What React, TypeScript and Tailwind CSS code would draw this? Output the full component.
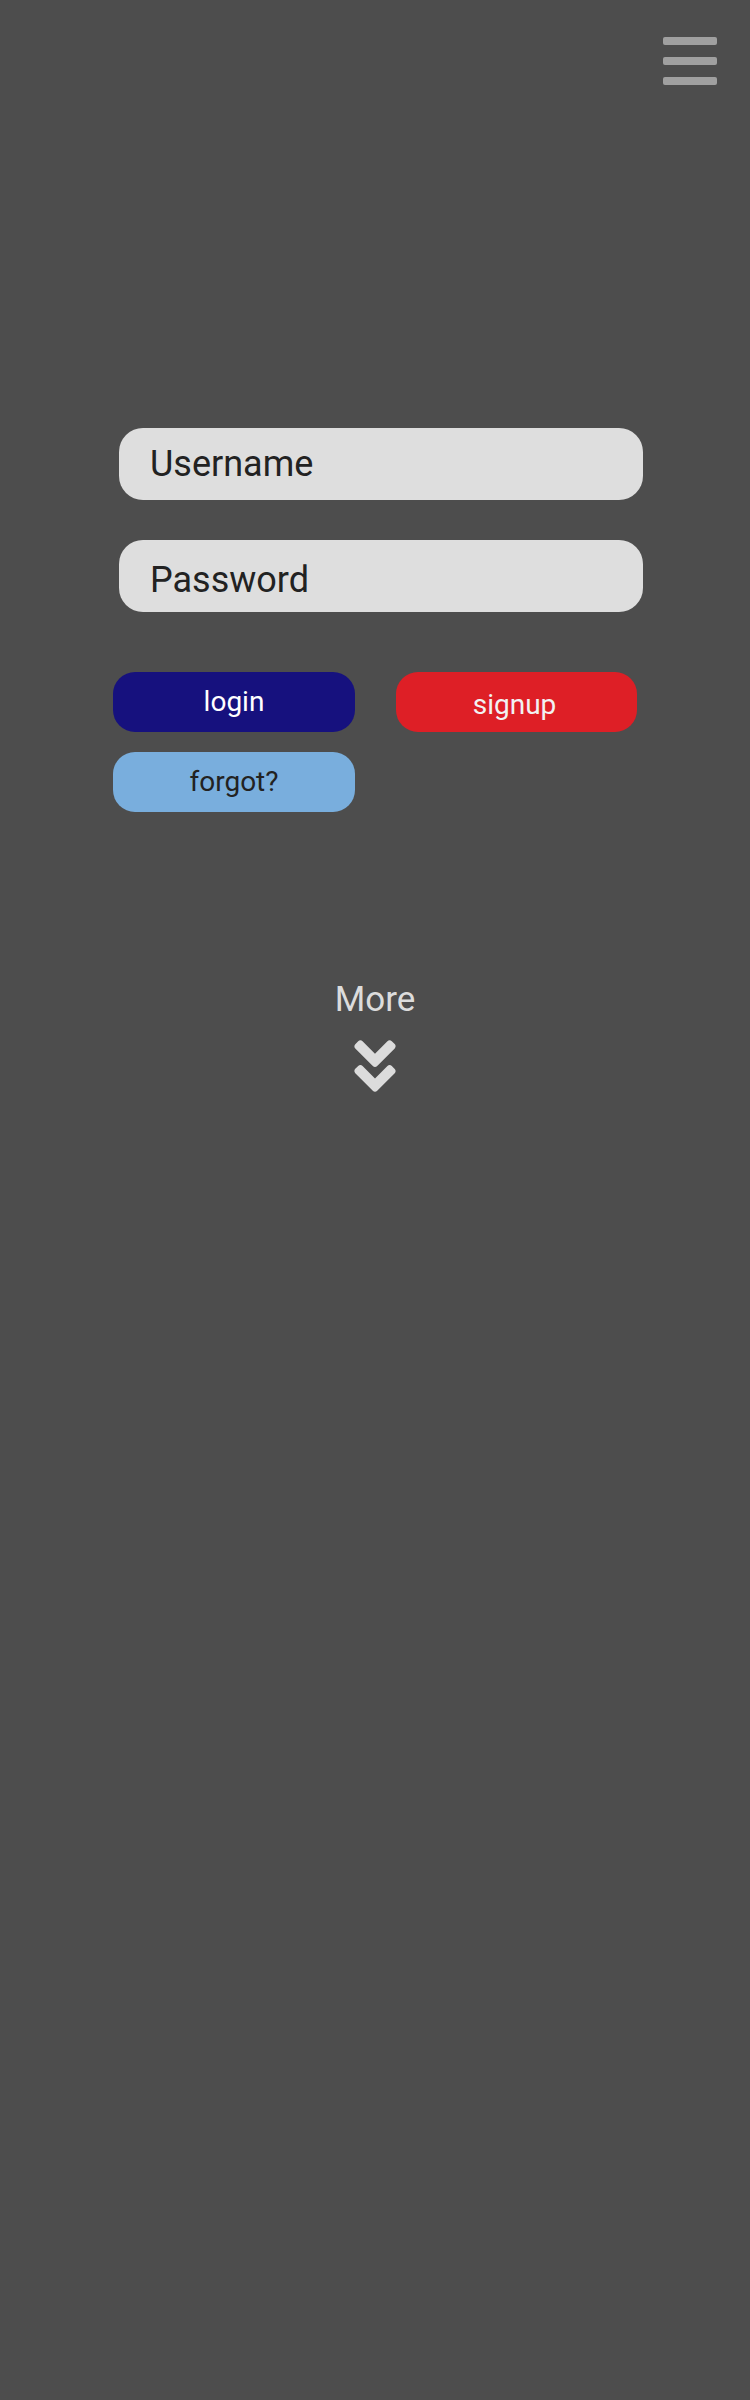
import { FaAngleDoubleDown } from 'react-icons/fa';

function MenuButton() {
  return (
    <button aria-label="menu" className="flex flex-col gap-3">
      <span className="block h-2 w-[54px] rounded-[2px] bg-[#a0a0a0]" />
      <span className="block h-2 w-[54px] rounded-[2px] bg-[#a0a0a0]" />
      <span className="block h-2 w-[54px] rounded-[2px] bg-[#a0a0a0]" />
    </button>
  );
}

export default function App() {
  return (
    <div className="min-h-[2400px] bg-[#4d4d4d] font-['Roboto',sans-serif]">
      {/* top bar */}
      <header className="flex justify-end pt-[37px] pr-[33px]">
        <MenuButton />
      </header>

      {/* login form */}
      <form className="mt-[343px]">
        <div className="ml-[119px] flex w-[524px] flex-col gap-10">
          <input
            type="text"
            placeholder="Username"
            className="h-[72px] rounded-[24px] bg-[#dedede] pl-[31px] text-[36px] text-[#222] outline-none placeholder:text-[#222]"
          />
          <input
            type="password"
            placeholder="Password"
            className="h-[72px] rounded-[24px] bg-[#dedede] pt-2 pl-[31px] text-[36px] text-[#222] outline-none placeholder:text-[#222]"
          />
        </div>

        <div className="mt-[60px] ml-[113px] grid w-[524px] grid-cols-[242px_241px] gap-x-[41px] gap-y-5">
          <button
            type="button"
            className="h-[60px] rounded-[22px] bg-[#16117e] text-[28px] text-white">
            login
          </button>
          <button
            type="button"
            className="h-[60px] rounded-[22px] bg-[#de1f26] pt-1.5 pr-1 text-[28px] text-[#f2f2f2]">
            signup
          </button>
          <button
            type="button"
            className="h-[60px] rounded-[22px] bg-[#79aedd] text-[28px] text-[#222]">
            forgot?
          </button>
        </div>
      </form>

      {/* more */}
      <div className="mt-[170px] flex flex-col items-center">
        <span className="text-[35px] leading-none text-[#dcdcdc]">More</span>
        <FaAngleDoubleDown size={66} className="mt-4 text-[#dcdcdc]" />
      </div>
    </div>
  );
}
